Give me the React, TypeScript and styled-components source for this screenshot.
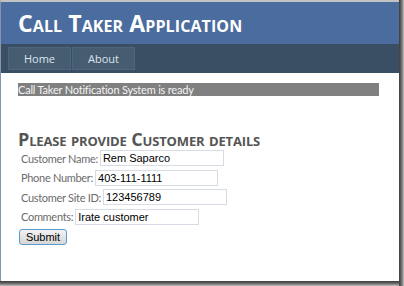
import styled, { createGlobalStyle } from "styled-components";

const GlobalStyle = createGlobalStyle`
  html, body {
    margin: 0;
    padding: 0;
    background: #ffffff;
  }
`;

function App() {
  return (
    <>
      <GlobalStyle />
      <Frame>
        <Page>
          <Header>
            <Title>Call Taker Application</Title>
          </Header>
          <MenuBar>
            <MenuItem>Home</MenuItem>
            <MenuItem>About</MenuItem>
          </MenuBar>
          <Main>
            <Notice>Call Taker Notification System is ready</Notice>
            <Heading>Please provide Customer details</Heading>
            <Form>
              <Row>
                <Label>Customer Name:</Label>
                <Field defaultValue="Rem Saparco" $width={124} />
              </Row>
              <Row>
                <Label>Phone Number:</Label>
                <Field defaultValue="403-111-1111" $width={123} />
              </Row>
              <Row>
                <Label>Customer Site ID:</Label>
                <Field defaultValue="123456789" $width={124} />
              </Row>
              <Row>
                <Label>Comments:</Label>
                <Field defaultValue="Irate customer" $width={124} />
              </Row>
              <SubmitButton type="button">Submit</SubmitButton>
            </Form>
          </Main>
        </Page>
      </Frame>
    </>
  );
}

// window shadow: a band on the right and one along the bottom
const Frame = styled.div`
  width: 404px;
  height: 286px;
  box-sizing: border-box;
  padding: 0 5px 5px 0;
  background:
    linear-gradient(to right, #3c3c3c, #5a5a5a 35%, #8a8a8a 70%, #c4c4c4) right top / 5px 100% no-repeat,
    linear-gradient(to bottom, #3c3c3c, #5a5a5a 35%, #8a8a8a 70%, #c4c4c4) left bottom / 100% 5px no-repeat,
    #ffffff;
  overflow: hidden;
`;

const Page = styled.div`
  height: 100%;
  box-sizing: border-box;
  border-top: 2px solid #c2c2c2;
  border-left: 1px solid #8795a8;
  background: #ffffff;
  display: flex;
  flex-direction: column;
`;

const Header = styled.div`
  height: 42px;
  background: #4b6c9e;
  display: flex;
  align-items: center;
  padding-left: 17px;
`;

const Title = styled.h1`
  margin: 0;
  font-family: "Open Sans", "Noto Sans", sans-serif;
  font-size: 23px;
  font-weight: 700;
  font-variant: small-caps;
  color: #ffffff;
  letter-spacing: 0.1px;
`;

const MenuBar = styled.div`
  height: 29px;
  background: #3a4f63;
  display: flex;
  align-items: center;
  padding-left: 7px;
  gap: 1px;
`;

const MenuItem = styled.div`
  width: 61px;
  height: 21px;
  background: #465c71;
  border: 1px solid #4e667d;
  color: #dde4ec;
  font-family: "Open Sans", "Noto Sans", sans-serif;
  font-size: 11px;
  display: flex;
  align-items: center;
  justify-content: center;
`;

const Main = styled.div`
  padding: 10px 0 0 17px;
`;

const Notice = styled.div`
  width: 361px;
  height: 13px;
  background: #808080;
  color: #f4f4f4;
  font-family: "Lato", "Open Sans", sans-serif;
  font-size: 11px;
  line-height: 13px;
  letter-spacing: -0.2px;
  white-space: nowrap;
`;

const Heading = styled.h2`
  margin: 34px 0 2px 0;
  font-family: "Open Sans", "Noto Sans", sans-serif;
  font-size: 18px;
  line-height: 18px;
  font-weight: 700;
  font-variant: small-caps;
  color: #555555;
  letter-spacing: -0.15px;
`;

const Form = styled.div`
  display: flex;
  flex-direction: column;
  align-items: flex-start;
  gap: 3.5px;
  padding-left: 3px;
`;

const Row = styled.div`
  display: flex;
  align-items: center;
  height: 16px;
`;

const Label = styled.span`
  font-family: "Lato", "Open Sans", sans-serif;
  font-size: 11px;
  color: #6b6b6b;
  margin-right: 2px;
  letter-spacing: -0.3px;
`;

const Field = styled.input<{ $width: number }>`
  width: ${(p) => p.$width}px;
  height: 16px;
  box-sizing: border-box;
  border: 1px solid #d7dbe4;
  padding: 0 2px;
  font-family: "Liberation Sans", Arial, sans-serif;
  font-size: 11px;
  color: #000000;
  outline: none;
`;

const SubmitButton = styled.button`
  margin-top: 1px;
  margin-left: -2px;
  width: 48px;
  height: 16px;
  padding: 0;
  box-sizing: border-box;
  border: 1px solid #5c9ccc;
  border-radius: 3px;
  background: linear-gradient(to bottom, #f2f2f2, #e4e4e4 50%, #d6d6d6);
  font-family: "Liberation Sans", Arial, sans-serif;
  font-size: 11px;
  color: #000000;
`;

export default App;
